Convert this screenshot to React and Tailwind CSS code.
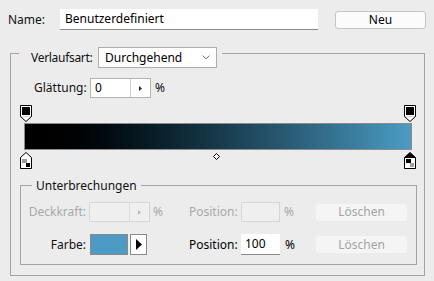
import React from "react";

const font = { fontFamily: '"Noto Sans", "Open Sans", sans-serif' };

function TopStop() {
  return (
    <svg width="12" height="17" viewBox="0 0 12 17">
      <path d="M0.5 0.5 H11.5 V11.5 L6 16.5 L0.5 11.5 Z" fill="#d4d4d4" stroke="#000" />
      <path d="M2 12 H10 L6 15.5 Z" fill="#fff" />
      <rect x="1" y="1" width="10" height="10" fill="#fff" />
      <rect x="2" y="2" width="8" height="8" fill="#000" />
    </svg>
  );
}

function BottomStop({ active }) {
  return (
    <svg width="12" height="17" viewBox="0 0 12 17">
      <path d="M6 0.5 L11.5 5.5 V16.5 H0.5 V5.5 Z" fill={active ? "#000" : "#fff"} stroke="#000" />
      <rect x="1" y="6" width="10" height="10" fill="#fff" />
      <rect x="2" y="7" width="8" height="8" fill="#fff" />
      {active ? (
        <>
          <rect x="2" y="7" width="5" height="4" fill="#000" />
          <rect x="6" y="11" width="4" height="4" fill="#a0a0a0" />
        </>
      ) : (
        <>
          <rect x="2" y="7" width="5" height="4" fill="#9a9a9a" />
          <rect x="6" y="11" width="4" height="4" fill="#000" />
        </>
      )}
    </svg>
  );
}

function SpinInput({ value, disabled }) {
  return (
    <div
      className={`flex h-[20px] w-[61px] border ${
        disabled ? "border-[#d6d6d6] bg-[#efefef]" : "border-[#b4b4b4] bg-white"
      }`}
    >
      <div className="flex-1 pl-[4px] text-[12px] leading-[18px] text-black">{value}</div>
      <div
        className={`flex w-[20px] items-center justify-center border-l ${
          disabled ? "border-[#dcdcdc]" : "border-[#cfcfcf]"
        }`}
      >
        <svg width="3" height="5" viewBox="0 0 3 5">
          <path d="M0 0 L3 2.5 L0 5 Z" fill={disabled ? "#b8b8b8" : "#222"} />
        </svg>
      </div>
    </div>
  );
}

export default function App() {
  return (
    <div className="h-[281px] w-[434px] overflow-hidden bg-[#ececec] text-[12px] text-[#111]" style={font}>
      {/* name row */}
      <div className="mt-[9px] flex h-[21px] items-center">
        <span className="ml-[8px] w-[52px]">Name:</span>
        <div className="h-[21px] w-[258px] border-b border-[#8a8a8a] bg-white pl-[5px] leading-[20px] text-black">
          Benutzerdefiniert
        </div>
        <button
          type="button"
          className="ml-[17px] h-[18px] w-[91px] rounded-[3px] border border-[#c4c4c4] bg-[#fbfbfb] text-[12px] leading-[16px] text-black"
        >
          Neu
        </button>
      </div>

      {/* outer group */}
      <div className="ml-[10px] mt-[23px] w-[415px] border border-[#a3a3a3] pb-[10px]">
        <div className="-mt-[7px] ml-[8px] flex w-fit items-center bg-[#ececec] pl-[12px] pr-[5px]">
          <span className="w-[67px] whitespace-nowrap tracking-[-0.3px]">Verlaufsart:</span>
          <div className="flex h-[21px] w-[119px] items-center justify-between border border-[#adadad] bg-white pl-[6px] pr-[6px] text-black">
            <span>Durchgehend</span>
            <svg width="8" height="5" viewBox="0 0 8 5">
              <path d="M0.5 0.5 L4 4 L7.5 0.5" fill="none" stroke="#7a7a7a" />
            </svg>
          </div>
        </div>

        <div className="mt-[10px] flex items-center">
          <span className="ml-[23px] w-[56px]">Glättung:</span>
          <SpinInput value="0" />
          <span className="ml-[4px]">%</span>
        </div>

        {/* gradient */}
        <div className="relative ml-[13px] mt-[7px] w-[388px] pb-[19px] pt-[18px]">
          <div className="absolute left-[-4px] top-0">
            <TopStop />
          </div>
          <div className="absolute left-[380px] top-0">
            <TopStop />
          </div>
          <div className="h-[27px] w-[388px] border border-[#8c8c8c] bg-gradient-to-r from-[#000000] to-[#4b9cc5]" />
          <div className="absolute left-[-4px] top-[47px]">
            <BottomStop />
          </div>
          <div className="absolute left-[380px] top-[47px]">
            <BottomStop active />
          </div>
          <div className="absolute left-[189px] top-[48px]">
            <svg width="7" height="7" viewBox="0 0 7 7">
              <path d="M3.5 0.5 L6.5 3.5 L3.5 6.5 L0.5 3.5 Z" fill="#fff" stroke="#000" />
            </svg>
          </div>
        </div>

        {/* stops group */}
        <div className="ml-[9px] mt-[16px] h-[80px] w-[397px] border border-[#a3a3a3]">
          <div className="-mt-[8px] ml-[11px] h-[16px] w-fit bg-[#ececec] px-[4px] leading-[16px]">
            Unterbrechungen
          </div>

          <div className="mt-[8px] flex h-[20px] items-center text-[#a9a9a9]">
            <span className="w-[65px] text-right">Deckkraft:</span>
            <div className="ml-[3px] flex w-[100px] items-center">
              <SpinInput disabled value="" />
              <span className="ml-[3px]">%</span>
            </div>
            <span className="w-[52px]">Position:</span>
            <div className="h-[20px] w-[39px] border border-[#d6d6d6] bg-[#efefef]" />
            <span className="w-[36px] pl-[4px]">%</span>
            <div className="flex h-[17px] w-[91px] items-center justify-center rounded-[3px] bg-[#f5f5f5] text-[#a4a4a4]">
              Löschen
            </div>
          </div>

          <div className="mt-[12px] flex h-[21px] items-center">
            <span className="w-[65px] text-right">Farbe:</span>
            <div className="ml-[3px] flex w-[100px] items-center">
              <div className="ml-[1px] h-[21px] w-[38px] border border-[#8a8a8a] bg-[#4b9bc4]" />
              <div className="ml-[2px] flex h-[21px] w-[17px] items-center justify-center border border-[#8a8a8a] bg-white">
                <svg width="6" height="11" viewBox="0 0 6 11">
                  <path d="M0 0 L6 5.5 L0 11 Z" fill="#000" />
                </svg>
              </div>
            </div>
            <span className="w-[52px] text-black">Position:</span>
            <div className="h-[21px] w-[39px] border-b border-[#8a8a8a] bg-white pl-[4px] leading-[20px] text-black">
              100
            </div>
            <span className="w-[36px] pl-[5px] text-black">%</span>
            <div className="flex h-[17px] w-[91px] items-center justify-center rounded-[3px] bg-[#f5f5f5] text-[#a4a4a4]">
              Löschen
            </div>
          </div>
        </div>
      </div>
    </div>
  );
}
